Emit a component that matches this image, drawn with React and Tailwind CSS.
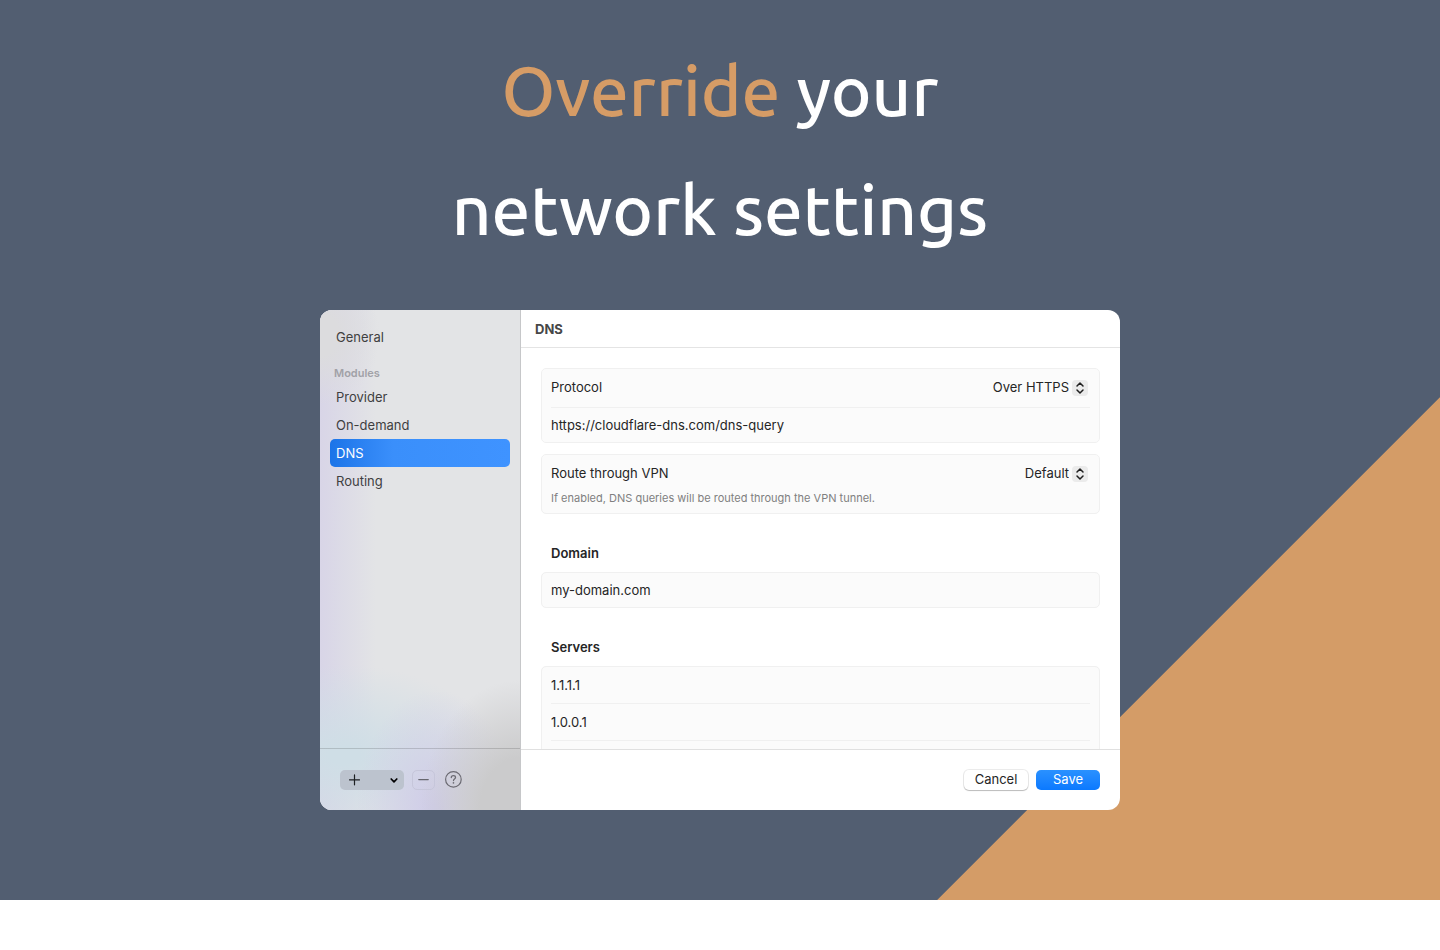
const modules = ["Provider", "On-demand", "DNS", "Routing"];
const servers = ["1.1.1.1", "1.0.0.1", ""];

function NavItem({ label, active }) {
  return (
    <a
      href="#"
      aria-current={active ? "page" : undefined}
      className={
        active
          ? "flex h-7 items-center rounded-[5px] bg-linear-to-r from-[#1b74e8] via-[#3a8ffb] via-35% to-[#3f93ff] px-1.5 pt-px text-white"
          : "flex h-7 items-center rounded-[5px] px-1.5 pt-px text-[#3f3f41]"
      }
    >
      {label}
    </a>
  );
}

function Sidebar() {
  return (
    <aside className="flex w-[201px] shrink-0 flex-col border-r border-[#c6c7c9] bg-[#e3e4e6] bg-[radial-gradient(100px_130px_at_100%_100%,#cbcbcc_40%,transparent),radial-gradient(80px_120px_at_58%_100%,#cfcce8_5%,transparent),radial-gradient(150px_90px_at_12%_89%,#cfdee6_10%,transparent),radial-gradient(60px_70px_at_0%_5%,#dcdcde_30%,transparent),linear-gradient(90deg,#d8d5e7,#e3e4e6_28%)]">
      <nav className="flex-1 px-2.5 pt-[13px]">
        <NavItem label="General" />
        <h2 className="px-1 pt-3 text-[11px] leading-5 font-semibold text-[#a1a1a7]">Modules</h2>
        {modules.map((name) => (
          <NavItem key={name} label={name} active={name === "DNS"} />
        ))}
      </nav>
      <div className="flex h-[62px] items-center border-t border-black/15 pl-5">
        <button
          type="button"
          aria-label="Add module"
          className="flex h-5 w-16 items-center justify-between rounded-[5px] bg-[#bcc3ce] pr-1 pl-2 text-[#1d1f22]"
        >
          <svg className="size-3" viewBox="0 0 12 12" fill="none" stroke="currentColor" strokeWidth="1.2" strokeLinecap="round">
            <path d="M6.5 .8v10M1.5 5.8h10" />
          </svg>
          <svg className="size-3" viewBox="0 0 12 12" fill="none" stroke="black" strokeWidth="1.7" strokeLinecap="round" strokeLinejoin="round">
            <path d="M3.2 5l2.8 2.8 2.8-2.8" />
          </svg>
        </button>
        <button
          type="button"
          aria-label="Remove module"
          className="ml-2 flex h-5 w-[23px] items-center justify-center rounded-[5px] border border-[#c6c6da] text-[#66666e]"
        >
          <svg className="h-3 w-[11px] shrink-0" viewBox="0 0 11 12" fill="none" stroke="currentColor" strokeWidth="1.3" strokeLinecap="round">
            <path d="M.8 5.6h9.4" />
          </svg>
        </button>
        <button type="button" aria-label="Help" className="ml-2.5 text-[#6b6a72]">
          <svg className="block size-[17px]" viewBox="0 0 17 17" fill="none" stroke="currentColor" strokeLinecap="round" strokeLinejoin="round">
            <circle cx="8.4" cy="8.4" r="7.8" strokeWidth="1.2" />
            <path d="M6.3 6.6c0-1.3.9-2 2.1-2s2.1.7 2.1 1.8c0 1.5-2 1.6-2 3.1" strokeWidth="1.3" />
            <path d="M8.45 11.8v.1" strokeWidth="1.6" />
          </svg>
        </button>
      </div>
    </aside>
  );
}

function Group({ children }) {
  return <div className="rounded-[5px] border border-[#f0f0f0] bg-[#fbfbfb] px-[9px]">{children}</div>;
}

function Select({ id, value }) {
  return (
    <span className="relative flex items-center pr-0.5">
      <select
        id={id}
        defaultValue={value}
        className="h-5 appearance-none bg-transparent pr-[19px] text-right outline-none"
      >
        <option>{value}</option>
      </select>
      <span className="pointer-events-none absolute right-0.5 flex size-4 items-center justify-center rounded-sm bg-[#ebebeb]">
        <svg className="size-4" viewBox="0 0 16 16" fill="none" stroke="#1f1f1f" strokeWidth="1.5" strokeLinecap="round" strokeLinejoin="round">
          <path d="M5 6l3-3 3 3M5 10l3 3 3-3" />
        </svg>
      </span>
    </span>
  );
}

function Field({ label, value, divided }) {
  return (
    <input
      type="text"
      aria-label={label}
      defaultValue={value}
      className={
        divided
          ? "block h-[37px] w-full border-b border-[#f0f0f0] bg-transparent outline-none"
          : "block h-[34px] w-full bg-transparent outline-none"
      }
    />
  );
}

function SectionTitle({ children }) {
  return <h3 className="px-2.5 pt-[29px] pb-[9px] leading-5 font-semibold">{children}</h3>;
}

export default function App() {
  return (
    <main className="bg-[linear-gradient(315deg,#d49c67_355px,#525e71_356px)] px-6 pt-[31px] pb-[90px]">
      <h1 className="text-center font-['Ubuntu','Noto_Sans',sans-serif] text-[69px] leading-[119px] font-medium text-white">
        <span className="text-[#d69c66]">Override</span> your
        <br />
        network settings
      </h1>

      <section className="mx-auto mt-[41px] flex max-w-[800px] overflow-hidden rounded-xl bg-white font-['Inter',sans-serif] text-[13px] text-[#252525]">
        <Sidebar />
        <div className="flex min-w-0 flex-1 flex-col">
          <header className="border-b border-[#e4e4e4] px-3.5 pt-[9px] pb-2">
            <h2 className="leading-5 font-bold text-[#474747]">DNS</h2>
          </header>
          <div className="max-h-[401px] overflow-y-auto px-5 pt-5 pb-5 [scrollbar-width:none]">
            <Group>
              <div className="flex h-[39px] items-center justify-between border-b border-[#f0f0f0]">
                <label htmlFor="protocol">Protocol</label>
                <Select id="protocol" value="Over HTTPS" />
              </div>
              <Field label="Server URL" value="https://cloudflare-dns.com/dns-query" />
            </Group>
            <div className="h-[11px]" />
            <Group>
              <div className="flex h-[37px] items-center justify-between">
                <label htmlFor="route">Route through VPN</label>
                <Select id="route" value="Default" />
              </div>
              <p className="pb-[9px] text-[11px] leading-3 text-[#808080]">
                If enabled, DNS queries will be routed through the VPN tunnel.
              </p>
            </Group>
            <SectionTitle>Domain</SectionTitle>
            <Group>
              <Field label="Domain" value="my-domain.com" />
            </Group>
            <SectionTitle>Servers</SectionTitle>
            <Group>
              {servers.map((address, index) => (
                <Field key={index} label={`Server ${index + 1}`} value={address} divided={index < 2} />
              ))}
            </Group>
          </div>
          <footer className="flex h-[61px] items-center justify-end gap-2 border-t border-[#e0e0e0] pr-5">
            <button
              type="button"
              className="h-5 w-16 rounded-[5px] bg-white shadow-[0_0_0_1px_rgb(0_0_0/0.08),0_1px_1px_rgb(0_0_0/0.2)]"
            >
              Cancel
            </button>
            <button type="button" className="h-5 w-16 rounded-[5px] bg-linear-to-b from-[#2a91ff] to-[#0a79ff] text-white">
              Save
            </button>
          </footer>
        </div>
      </section>
    </main>
  );
}
